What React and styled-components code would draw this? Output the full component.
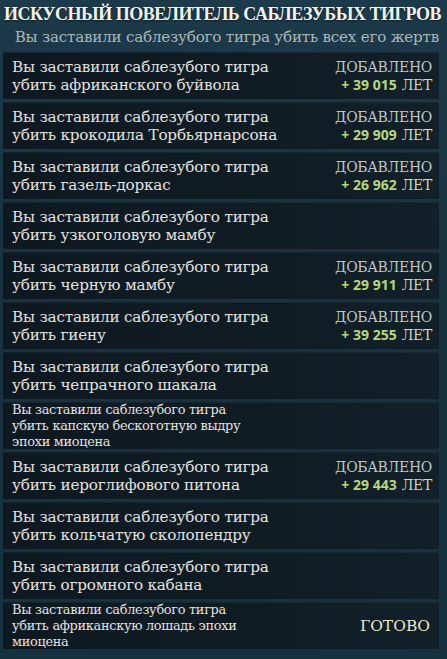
import React from "react";
import styled, { createGlobalStyle } from "styled-components";

const GlobalStyle = createGlobalStyle`
  html, body {
    margin: 0;
    padding: 0;
  }
  body {
    width: 447px;
    height: 659px;
    overflow: hidden;
    background: linear-gradient(180deg, #1d3a4a 0%, #18323f 40%, #163140 100%);
    font-family: "DejaVu Serif", "Liberation Serif", serif;
  }
`;

const Page = styled.div`
  display: flex;
  flex-direction: column;
  padding: 0 8px 0 3px;
`;

const Title = styled.h1`
  margin: 0;
  padding: 3px 0 0 1px;
  font-family: "Liberation Serif", serif;
  font-size: 18px;
  line-height: 22px;
  font-weight: 700;
  color: #f2f2f2;
  white-space: nowrap;
  letter-spacing: -0.48px;
  text-shadow: 0 1px 2px rgba(0, 0, 0, 0.6);
`;

const Subtitle = styled.div`
  margin: 2px 0 5px;
  text-align: right;
  font-size: 15.1px;
  line-height: 20px;
  color: #a9b6ba;
  white-space: nowrap;
  letter-spacing: -0.2px;
`;

const List = styled.div`
  display: flex;
  flex-direction: column;
  gap: 3px;
`;

const Row = styled.div`
  height: 47px;
  display: flex;
  align-items: center;
  justify-content: space-between;
  padding: 0 7px 0 9px;
  background: linear-gradient(90deg, #0e1820 0%, #101c24 60%, #122029 100%);
  border-top: 1px solid rgba(120, 160, 180, 0.08);
  box-sizing: border-box;
`;

const Name = styled.div`
  color: #e2e2e0;
  font-size: ${({ $small }) => ($small ? "12.9px" : "15.2px")};
  line-height: ${({ $small }) => ($small ? "16px" : "18.5px")};
  letter-spacing: ${({ $small }) => ($small ? "-0.3px" : "-0.2px")};
  max-width: ${({ $small }) => ($small ? "250px" : "330px")};
`;

const Reward = styled.div`
  display: flex;
  flex-direction: column;
  align-items: flex-end;
  line-height: 17px;
  font-size: 14px;
  white-space: nowrap;
`;

const Added = styled.span`
  color: #bfc6c8;
  letter-spacing: -0.3px;
`;

const Years = styled.span`
  color: #c9d6bd;
  letter-spacing: -0.3px;
`;

const Amount = styled.span`
  font-family: "Open Sans", "Noto Sans", sans-serif;
  font-weight: 700;
  font-size: 14px;
  color: #b6d67f;
  margin-right: 5px;
`;

const Done = styled.div`
  color: #e9e8c6;
  font-size: 15.5px;
  margin-right: 2px;
`;

const rows = [
  { prey: "убить африканского буйвола", years: "39 015" },
  { prey: "убить крокодила Торбьярнарсона", years: "29 909" },
  { prey: "убить газель-доркас", years: "26 962" },
  { prey: "убить узкоголовую мамбу" },
  { prey: "убить черную мамбу", years: "29 911" },
  { prey: "убить гиену", years: "39 255" },
  { prey: "убить чепрачного шакала" },
  { prey: "убить капскую бескоготную выдру эпохи миоцена", small: true },
  { prey: "убить иероглифового питона", years: "29 443" },
  { prey: "убить кольчатую сколопендру" },
  { prey: "убить огромного кабана" },
  { prey: "убить африканскую лошадь эпохи миоцена", small: true, done: true },
];

export default function App() {
  return (
    <>
      <GlobalStyle />
      <Page>
        <Title>ИСКУСНЫЙ ПОВЕЛИТЕЛЬ САБЛЕЗУБЫХ ТИГРОВ</Title>
        <Subtitle>Вы заставили саблезубого тигра убить всех его жертв</Subtitle>
        <List>
          {rows.map((r) => (
            <Row key={r.prey}>
              <Name $small={r.small}>
                Вы заставили саблезубого тигра
                <br />
                {r.prey}
              </Name>
              {r.years && (
                <Reward>
                  <Added>ДОБАВЛЕНО</Added>
                  <span>
                    <Amount>+ {r.years}</Amount>
                    <Years>ЛЕТ</Years>
                  </span>
                </Reward>
              )}
              {r.done && <Done>ГОТОВО</Done>}
            </Row>
          ))}
        </List>
      </Page>
    </>
  );
}
